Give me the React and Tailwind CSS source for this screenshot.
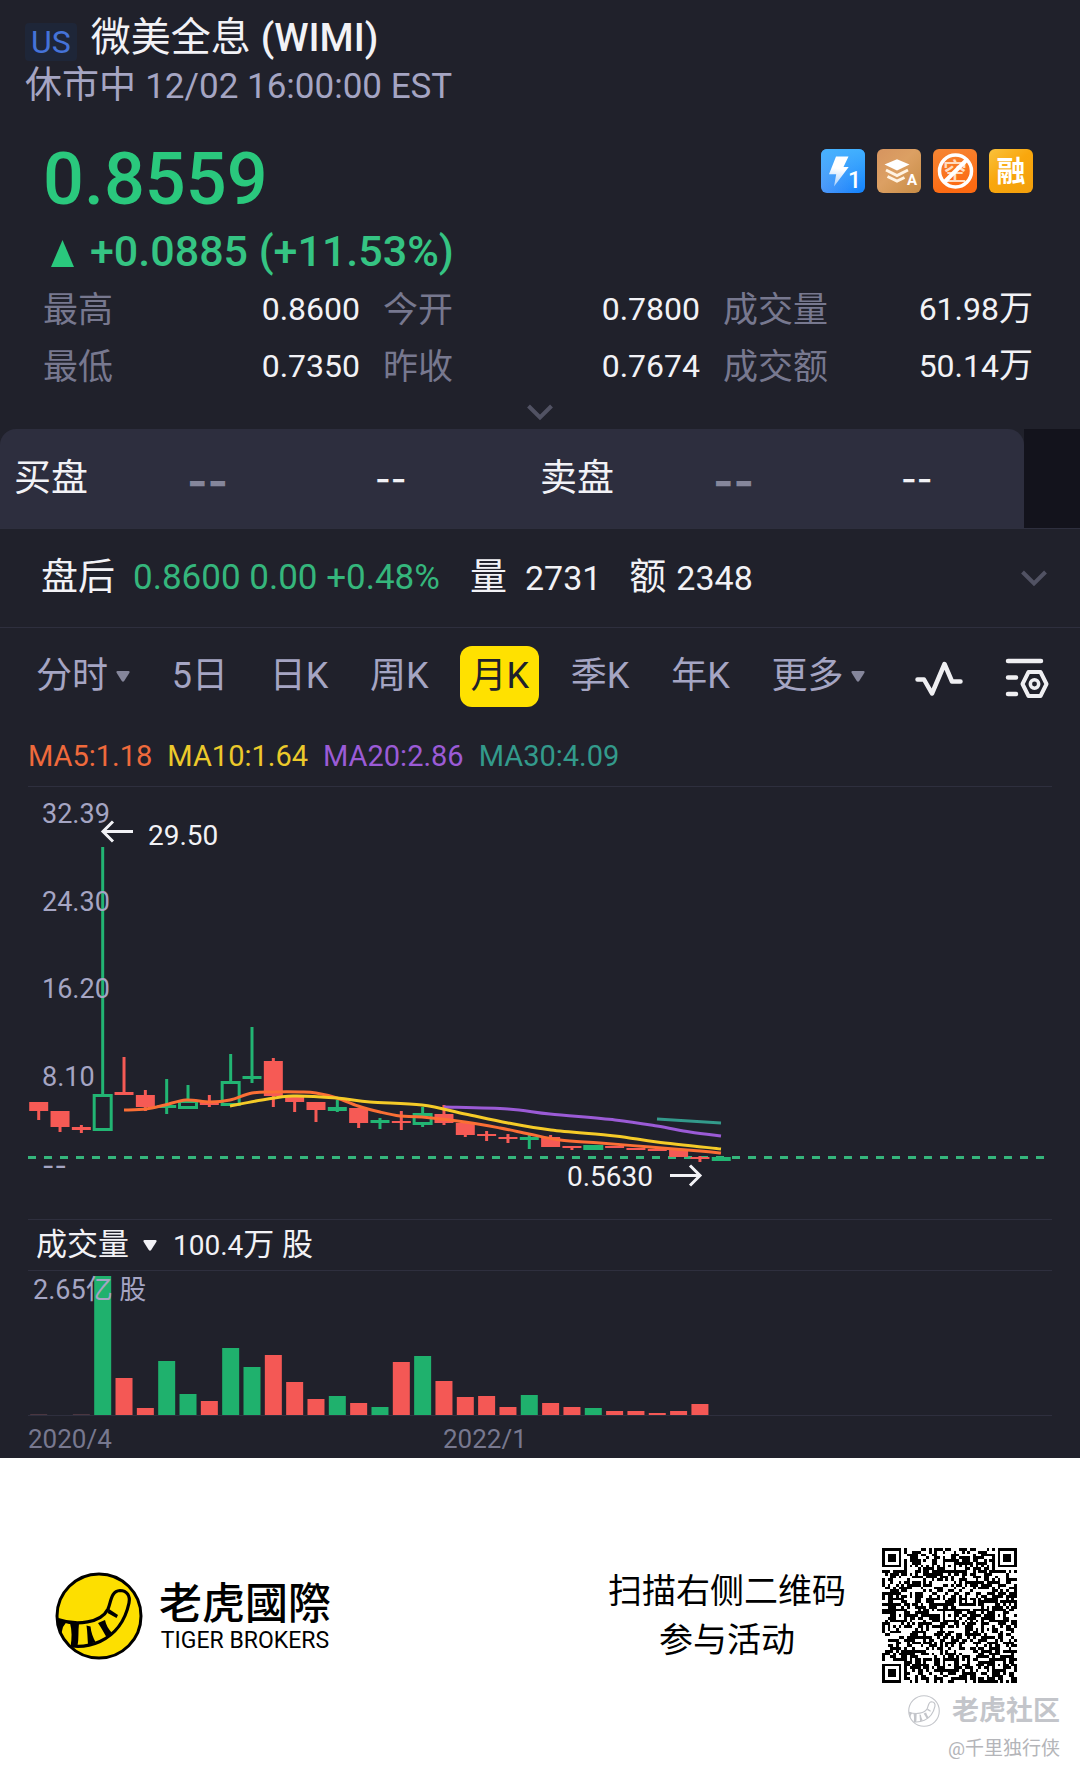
import React from "react";

const STEP = 21.33;
const FIRST = 10.7;
const GREEN = "#22b573";
const RED = "#f65a55";

// [kind, bodyTop, bodyBottom, wickTop, wickBottom]; kind: r = falling, g = rising (solid), h = rising (hollow)
const CANDLES = [
  ["r", 315, 324, 315, 333],
  ["r", 324, 340, 324, 345],
  ["r", 340, 343, 338, 346],
  ["h", 307, 344, 60, 307],
  ["r", 305, 308, 270, 308],
  ["r", 308, 320, 303, 324],
  ["g", 318, 321, 292, 327],
  ["h", 313, 322, 298, 313],
  ["r", 315, 318, 308, 320],
  ["h", 294, 319, 267, 294],
  ["g", 289, 292, 240, 296],
  ["r", 274, 309, 271, 320],
  ["r", 308, 315, 308, 325],
  ["r", 315, 323, 315, 335],
  ["g", 320, 324, 313, 325],
  ["r", 321, 336, 321, 341],
  ["g", 333, 336, 331, 342],
  ["r", 334, 336, 324, 343],
  ["h", 326, 338, 320, 340],
  ["r", 327, 336, 318, 338],
  ["r", 336, 348, 336, 350],
  ["r", 347, 349, 344, 354],
  ["r", 350, 352, 347, 356],
  ["g", 350, 353, 348, 362],
  ["r", 350, 360, 348, 360],
  ["r", 359, 361, 359, 363],
  ["h", 358, 363, 358, 363],
  ["r", 359, 361, 359, 361],
  ["r", 361, 363, 361, 363],
  ["r", 362, 364, 362, 364],
  ["r", 363, 370, 363, 370],
  ["r", 370, 372, 369, 375],
  ["g", 370, 374, 370, 374],
];

const AVERAGES = [
  { color: "#9b5bd6", points: [[416, 320], [480, 322], [522, 327], [587, 333], [629, 339], [662, 345], [693, 349]] },
  { color: "#339a8b", points: [[629, 332], [693, 336]] },
  { color: "#fb6f35", points: [[96, 323], [118, 322], [137, 318], [158, 313], [182, 315], [202, 313], [224, 306], [245, 305], [272, 305], [288, 306], [309, 311], [330, 319], [352, 325], [372, 329], [394, 330], [437, 335], [472, 341], [501, 347], [532, 353], [572, 356], [622, 360], [672, 364], [693, 366]] },
  { color: "#f5cb28", points: [[202, 319], [234, 313], [265, 309], [309, 311], [342, 315], [394, 318], [437, 327], [480, 336], [523, 343], [587, 349], [629, 355], [693, 362]] },
];

const VOLUMES = [
  ["d", 1], ["d", 0], ["d", 1], ["g", 139], ["r", 37], ["r", 7], ["g", 54], ["g", 21], ["r", 14],
  ["g", 67], ["g", 48], ["r", 60], ["r", 33], ["r", 16], ["g", 19], ["r", 12], ["g", 8], ["r", 53],
  ["g", 59], ["r", 34], ["r", 18], ["r", 19], ["r", 8], ["g", 20], ["r", 12], ["r", 8], ["g", 7],
  ["r", 4], ["r", 4], ["r", 2], ["r", 4], ["r", 11],
];

function Caret({ className }) {
  return (
    <svg viewBox="0 0 14 11" className={className} aria-hidden="true">
      <path d="M1.5 0h11q1.6 .3 .9 1.8L8.2 10q-1.2 1.4-2.4 0L.6 1.8Q-.1 .3 1.5 0z" fill="currentColor" />
    </svg>
  );
}

function Chevron() {
  return (
    <svg viewBox="0 0 28 18" className="h-[18px] w-7" fill="none" stroke="#515263" strokeWidth="4" aria-hidden="true">
      <path d="M2.5 3L14 14.5L25.5 3" />
    </svg>
  );
}

function Badges() {
  return (
    <ul className="flex gap-3 pt-[9px]">
      <li>
        <svg viewBox="0 0 44 44" className="size-11" role="img" aria-label="Level 1">
          <defs>
            <linearGradient id="lv" x1="0" y1="0.3" x2="1" y2="0.6">
              <stop offset="0" stopColor="#5a9bf8" />
              <stop offset="1" stopColor="#1583fd" />
            </linearGradient>
            <linearGradient id="lvTop" x1="0" y1="0" x2="0" y2="1">
              <stop offset="0" stopColor="#44b4ff" stopOpacity="0.9" />
              <stop offset="1" stopColor="#44b4ff" stopOpacity="0" />
            </linearGradient>
            <linearGradient id="bolt" x1="0.5" y1="0" x2="0.4" y2="1">
              <stop offset="0.4" stopColor="#fff" />
              <stop offset="1" stopColor="#a8cffb" />
            </linearGradient>
          </defs>
          <rect width="44" height="44" rx="6" fill="url(#lv)" />
          <rect width="44" height="44" rx="6" fill="url(#lvTop)" />
          <path d="M15 7.5h12.5L22.5 18h5.2L13 37.5l2.2-12.3H8z" fill="url(#bolt)" />
          <text x="27" y="39" fontSize="23" fontWeight="500" fill="#fff">1</text>
        </svg>
      </li>
      <li>
        <svg viewBox="0 0 44 44" className="size-11" role="img" aria-label="A">
          <defs>
            <linearGradient id="ly" x1="0" y1="0" x2="1" y2="1">
              <stop offset="0" stopColor="#d6945f" />
              <stop offset="0.45" stopColor="#dca063" />
              <stop offset="1" stopColor="#c78c45" />
            </linearGradient>
          </defs>
          <rect width="44" height="44" rx="6" fill="url(#ly)" />
          <path d="M7.5 15.5L20 10.2L32.5 15.5L20 21.5z" fill="#fff" />
          <path d="M9 21l11 5.5L31 21M10.5 27.5l9.5 4.5l7.5-3.5" fill="none" stroke="#fff3e2" strokeWidth="3" />
          <text x="30" y="36" fontSize="15" fontWeight="700" fill="#fff">A</text>
        </svg>
      </li>
      <li>
        <svg viewBox="0 0 44 44" className="size-11" role="img" aria-label="空">
          <defs>
            <linearGradient id="sh" x1="0" y1="0" x2="0.3" y2="1">
              <stop offset="0" stopColor="#f58634" />
              <stop offset="1" stopColor="#fd6a12" />
            </linearGradient>
          </defs>
          <rect width="44" height="44" rx="6" fill="url(#sh)" />
          <text x="22" y="31" fontSize="24" fontWeight="500" textAnchor="middle" fill="#ffdcc0">空</text>
          <circle cx="22.5" cy="22" r="16" fill="none" stroke="#fff" strokeWidth="3.5" />
          <path d="M11.5 33L33.5 11" stroke="#fff" strokeWidth="4" />
        </svg>
      </li>
      <li>
        <svg viewBox="0 0 44 44" className="size-11" role="img" aria-label="融">
          <defs>
            <linearGradient id="mg" x1="0" y1="0" x2="0.8" y2="1">
              <stop offset="0" stopColor="#f9c23c" />
              <stop offset="0.5" stopColor="#f9a70d" />
              <stop offset="1" stopColor="#f3a00c" />
            </linearGradient>
          </defs>
          <rect width="44" height="44" rx="6" fill="url(#mg)" />
          <text x="22" y="33" fontSize="29" fontWeight="700" textAnchor="middle" fill="#fff">融</text>
        </svg>
      </li>
    </ul>
  );
}

const STATS = [
  ["最高", "0.8600", ""], ["今开", "0.7800", ""], ["成交量", "61.98", "万"],
  ["最低", "0.7350", ""], ["昨收", "0.7674", ""], ["成交额", "50.14", "万"],
];

function Quote() {
  return (
    <section>
      <div className="pt-3 pl-[25px]">
        <h1 className="flex h-[52px] items-center gap-3.5 text-[40px] leading-[52px] text-[#f2f2f6]">
          <span className="mt-2 flex h-[38px] items-center rounded bg-[#1e2638] px-1.5 text-[32px] text-[#4573d8]">US</span>
          <span className="whitespace-pre">微美全息 <span className="text-[39px] font-medium">(WIMI)</span></span>
        </h1>
        <p className="h-11 text-[37px] leading-11 text-[#a5a5c3]">
          休市中 <span className="text-[35px]">12/02 16:00:00 EST</span>
        </p>
      </div>
      <div className="flex justify-between pt-8 pr-[47px] pl-[43px]">
        <p className="text-[72px] leading-20 font-medium text-[#2ac87d]">0.8559</p>
        <Badges />
      </div>
      <p className="flex h-[60px] items-center gap-4 pt-0.5 pl-[51px] text-[43px] font-medium text-[#35c483]">
        <svg viewBox="0 0 23 27" className="mt-1 h-[27px] w-[23px]" role="img" aria-label="up">
          <path d="M11.5 0L23 27H0z" fill="#2ac87d" />
        </svg>
        +0.0885 (+11.53%)
      </p>
      <dl className="grid grid-cols-[317fr_317fr_310fr] gap-x-[23px] pr-[47px] pl-[43px]">
        {STATS.map(([label, value, unit]) => (
          <div key={label} className="flex h-[57px] items-center justify-between">
            <dt className="pt-1.5 text-[35px] text-[#77788f]">{label}</dt>
            <dd className="text-[32px] text-[#f2f2f6]">{value}<span className="text-[34px]">{unit}</span></dd>
          </div>
        ))}
      </dl>
      <button type="button" aria-label="展开" className="flex h-[35px] w-full items-center justify-center">
        <Chevron />
      </button>
    </section>
  );
}

function Depth() {
  return (
    <section className="bg-[#13131c]">
      <div className="mr-14 bg-[#20212b]">
        <div className="grid h-[99px] grid-cols-[187fr_188fr_151fr_187fr_188fr_123fr] items-center rounded-t-2xl bg-[#2d2e3e] text-[37px] text-[#f2f2f6]">
          {["买盘", "卖盘"].map((label) => (
            <React.Fragment key={label}>
              <span className="pl-3.5">{label}</span>
              <span className="pt-1 font-[Inter] text-[44px] font-bold text-[#85869b]">--</span>
              <span className="font-[Inter] text-[34px] font-medium">--</span>
            </React.Fragment>
          ))}
        </div>
      </div>
    </section>
  );
}

function AfterHours() {
  return (
    <section className="flex h-[100px] items-center border-y border-[#2e2f3e] pr-8 pl-[41px] text-[34px] text-[#f2f2f6]">
      <span className="text-[37px]">盘后</span>
      <span className="ml-[18px] text-[35px] text-[#35b67c]">0.8600 0.00 +0.48%</span>
      <span className="ml-[30px] text-[37px]">量</span>
      <span className="ml-[18px]">2731</span>
      <span className="ml-7 text-[37px]">额</span>
      <span className="ml-2.5">2348</span>
      <button type="button" aria-label="展开盘后" className="ml-auto"><Chevron /></button>
    </section>
  );
}

function Tab({ children, caret, active }) {
  return (
    <button
      type="button"
      aria-pressed={!!active}
      className={
        active
          ? "flex h-[61px] items-center rounded-xl bg-[#ffe100] px-2.5 pb-0.5 text-[#20212b]"
          : "flex h-[61px] items-center px-2.5 pb-0.5 text-[#a5a5c3]"
      }
    >
      {children}
      {caret && <Caret className="mt-0.5 ml-2 h-[11px] w-3.5 text-[#85869b]" />}
    </button>
  );
}

function Tabs() {
  return (
    <nav className="flex items-center justify-between pt-[18px] pr-[21px] pl-[26px] text-4xl">
      <Tab caret>分时</Tab>
      <Tab>5日</Tab>
      <Tab>日K</Tab>
      <Tab>周K</Tab>
      <Tab active>月K</Tab>
      <Tab>季K</Tab>
      <Tab>年K</Tab>
      <Tab caret>更多</Tab>
      <button type="button" aria-label="指标" className="ml-2 px-2.5 pt-1">
        <svg viewBox="0 0 48 40" className="h-10 w-12" fill="none" stroke="#efeff2" strokeWidth="4.5" strokeLinecap="round" strokeLinejoin="round">
          <path d="M2.5 20.5h6.5l8 14L29.5 5l7.5 17.5h8.5" />
        </svg>
      </button>
      <button type="button" aria-label="设置" className="px-2.5 pt-0.5">
        <svg viewBox="0 0 44 42" className="h-[42px] w-11" fill="none" stroke="#efeff2" strokeWidth="4.5" strokeLinecap="round" strokeLinejoin="round">
          <path d="M3 4h33M3 20.5h8M3 37h8" />
          <path d="M23.5 15h12l6 12l-6 12h-12l-6-12z" strokeWidth="4" />
          <circle cx="29.5" cy="27" r="4.2" strokeWidth="3.5" />
        </svg>
      </button>
    </nav>
  );
}

function Candle({ data, index }) {
  const [kind, top, bottom, high, low] = data;
  const x = FIRST + STEP * index;
  const color = kind === "r" ? RED : GREEN;
  return (
    <g stroke={color} strokeWidth="3" fill="none">
      {kind === "h" ? (
        <>
          <path d={`M${x} ${high}V${top}M${x} ${bottom}V${Math.max(low, bottom)}`} />
          <rect x={x - 8.5} y={top + 1.5} width="17" height={bottom - top - 3} />
        </>
      ) : (
        <>
          <path d={`M${x} ${high}V${low}`} />
          <rect x={x - 9.5} y={top} width="19" height={bottom - top} fill={color} stroke="none" />
        </>
      )}
    </g>
  );
}

function smooth(points) {
  let d = `M${points[0].join(" ")}`;
  for (let i = 1; i < points.length; i++) {
    const a = points[Math.max(i - 2, 0)];
    const b = points[i - 1];
    const c = points[i];
    const e = points[Math.min(i + 1, points.length - 1)];
    d += `C${b[0] + (c[0] - a[0]) / 6} ${b[1] + (c[1] - a[1]) / 6} ${c[0] - (e[0] - b[0]) / 6} ${c[1] - (e[1] - b[1]) / 6} ${c[0]} ${c[1]}`;
  }
  return d;
}

function PriceChart() {
  return (
    <svg viewBox="0 0 1024 432" className="block w-full" role="img" aria-label="月K">
      <path d="M0 370.5H1018" stroke="#35b67c" strokeWidth="3" strokeDasharray="8 8" />
      {CANDLES.map((c, i) => <Candle key={i} data={c} index={i} />)}
      {AVERAGES.map((a) => <path key={a.color} d={smooth(a.points)} fill="none" stroke={a.color} strokeWidth="3" />)}
      <g fill="#a5a5c3" fontSize="27">
        <text x="14" y="36">32.39</text>
        <text x="14" y="124">24.30</text>
        <text x="14" y="211">16.20</text>
        <text x="14" y="299">8.10</text>
        <text x="14" y="388" className="font-[Inter]">--</text>
      </g>
      <g fill="#f2f2f6" fontSize="28">
        <text x="120" y="58">29.50</text>
        <text x="539" y="399">0.5630</text>
      </g>
      <g fill="none" stroke="#f2f2f6" strokeWidth="3">
        <path d="M105 44.5H75M85 34.5L75 44.5L85 54.5" />
        <path d="M642 388.5H672M662 378.5L672 388.5L662 398.5" />
      </g>
    </svg>
  );
}

function VolumeChart() {
  return (
    <div className="border-b border-[#2e2f3e]">
      <svg viewBox="0 0 1024 144" className="block w-full" role="img" aria-label="成交量">
        {VOLUMES.map(([kind, h], i) => (
          <rect key={i} x={FIRST + STEP * i - 8.5} y={144 - h} width="17" height={h}
            fill={kind === "g" ? "#1fb16d" : kind === "r" ? "#f45855" : "#4a3640"} />
        ))}
        <text x="5" y="28" fontSize="27" fill="#a5a5c3">2.65亿 股</text>
      </svg>
    </div>
  );
}

function Charts() {
  return (
    <section className="px-7">
      <ul className="flex h-20 items-center gap-[15px] border-b border-[#2e2f3e] pt-5 text-[29px]">
        <li className="text-[#ef6a3c]">MA5:1.18</li>
        <li className="text-[#ecc92b]">MA10:1.64</li>
        <li className="text-[#9b5bd6]">MA20:2.86</li>
        <li className="text-[#339a8b]">MA30:4.09</li>
      </ul>
      <PriceChart />
      <div className="flex h-[52px] items-center border-y border-[#2e2f3e] pl-2 text-[31px] text-[#f2f2f6]">
        <button type="button" className="flex items-center">
          成交量
          <Caret className="ml-3.5 h-[11px] w-3.5" />
        </button>
        <span className="ml-4"><span className="text-[28px]">100.4</span>万 股</span>
      </div>
      <VolumeChart />
      <div className="flex h-[42px] items-center pt-1 text-[26px] text-[#77788f]">
        <span className="w-[406px]">2020/4</span>
        <span className="pl-[9px]">2022/1</span>
      </div>
    </section>
  );
}

function TigerMark({ className, line, fill }) {
  return (
    <svg viewBox="0 0 88 88" className={className} fill="none" stroke={line} role="img" aria-label="Tiger">
      <circle cx="44" cy="44" r="42" fill={fill} strokeWidth="3" />
      <path d="M3 47.5C22 54 46 51 53 37C56 30 56 19 65 18.5C72 18.5 75.5 24 74 31C71 45 63 61 45 69.5C35 74 26 75 17 74" strokeWidth="3.2" />
      <g fill={line} stroke="none">
        <path d="M2 46l9.5 4l-3.5 5l-2 8z" />
        <path d="M15 51l9 .5c-1 8 0 15-1.5 22.5l-7 1c1.5-9 1.5-16-.5-24z" />
        <path d="M31.5 53.5l4 1c.5 6 2.5 11 5 15.5l-7.5 2.5c-.5-6-.5-12-1.5-19z" />
        <path d="M43 51l7-3c1 5 3.5 9 7 13l-5 5c-3-5-5.5-10-9-15z" />
        <path d="M54 37l9 6l-1.5 3l-9-5z" />
      </g>
    </svg>
  );
}

const QR_SIZE = 49;

function qrPath() {
  const centers = [6, 24, 42];
  const ring = (r, c, cr, cc) => Math.max(Math.abs(r - cr), Math.abs(c - cc));
  let seed = 20221;
  let d = "";
  for (let r = 0; r < QR_SIZE; r++) {
    for (let c = 0; c < QR_SIZE; c++) {
      seed = (seed * 1103515245 + 12345) % 2147483648;
      let on = ((seed >> 12) & 255) < 136;
      if (r === 6 || c === 6) on = (r + c) % 2 === 0;
      for (const a of centers) for (const b of centers) {
        const k = ring(r, c, a, b);
        if (k <= 2) on = k !== 1;
      }
      for (const [a, b] of [[3, 3], [3, QR_SIZE - 4], [QR_SIZE - 4, 3]]) {
        const k = ring(r, c, a, b);
        if (k <= 4) on = k !== 4 && k !== 2;
      }
      if (on) d += `M${c} ${r}h1v1h-1z`;
    }
  }
  return d;
}

function Footer() {
  return (
    <footer className="bg-white pt-[90px] pb-2 text-black">
      <div className="flex items-center pr-[63px] pl-[55px]">
        <TigerMark className="size-[88px]" line="#000" fill="#fddf00" />
        <div className="ml-4 text-center">
          <p className="text-[43px] leading-[50px] font-medium font-[Roboto,'Noto_Sans_CJK_TC',sans-serif]">老虎國際</p>
          <p className="text-[23px] leading-6">TIGER BROKERS</p>
        </div>
        <p className="ml-auto text-center text-[34px] leading-[49px]">扫描右侧二维码<br />参与活动</p>
        <svg viewBox="0 0 49 49" className="ml-9 size-[135px]" shapeRendering="crispEdges" role="img" aria-label="二维码">
          <path d={qrPath()} fill="#000" />
        </svg>
      </div>
      <div className="flex items-center justify-end gap-3 pt-2 pr-5 text-[#c3c5ca]">
        <TigerMark className="size-8" line="#c3c5ca" fill="none" />
        <span className="text-[27px] leading-10 font-bold">老虎社区</span>
      </div>
      <p className="pr-5 text-right text-[19px] leading-9 text-[#b4b5b9]">@千里独行侠</p>
    </footer>
  );
}

export default function App() {
  return (
    <main className="min-h-screen bg-white font-[Roboto,'Noto_Sans_CJK_SC',sans-serif]" lang="zh-CN">
      <div className="bg-[#20212b]">
        <Quote />
        <Depth />
        <AfterHours />
        <Tabs />
        <Charts />
      </div>
      <Footer />
    </main>
  );
}
